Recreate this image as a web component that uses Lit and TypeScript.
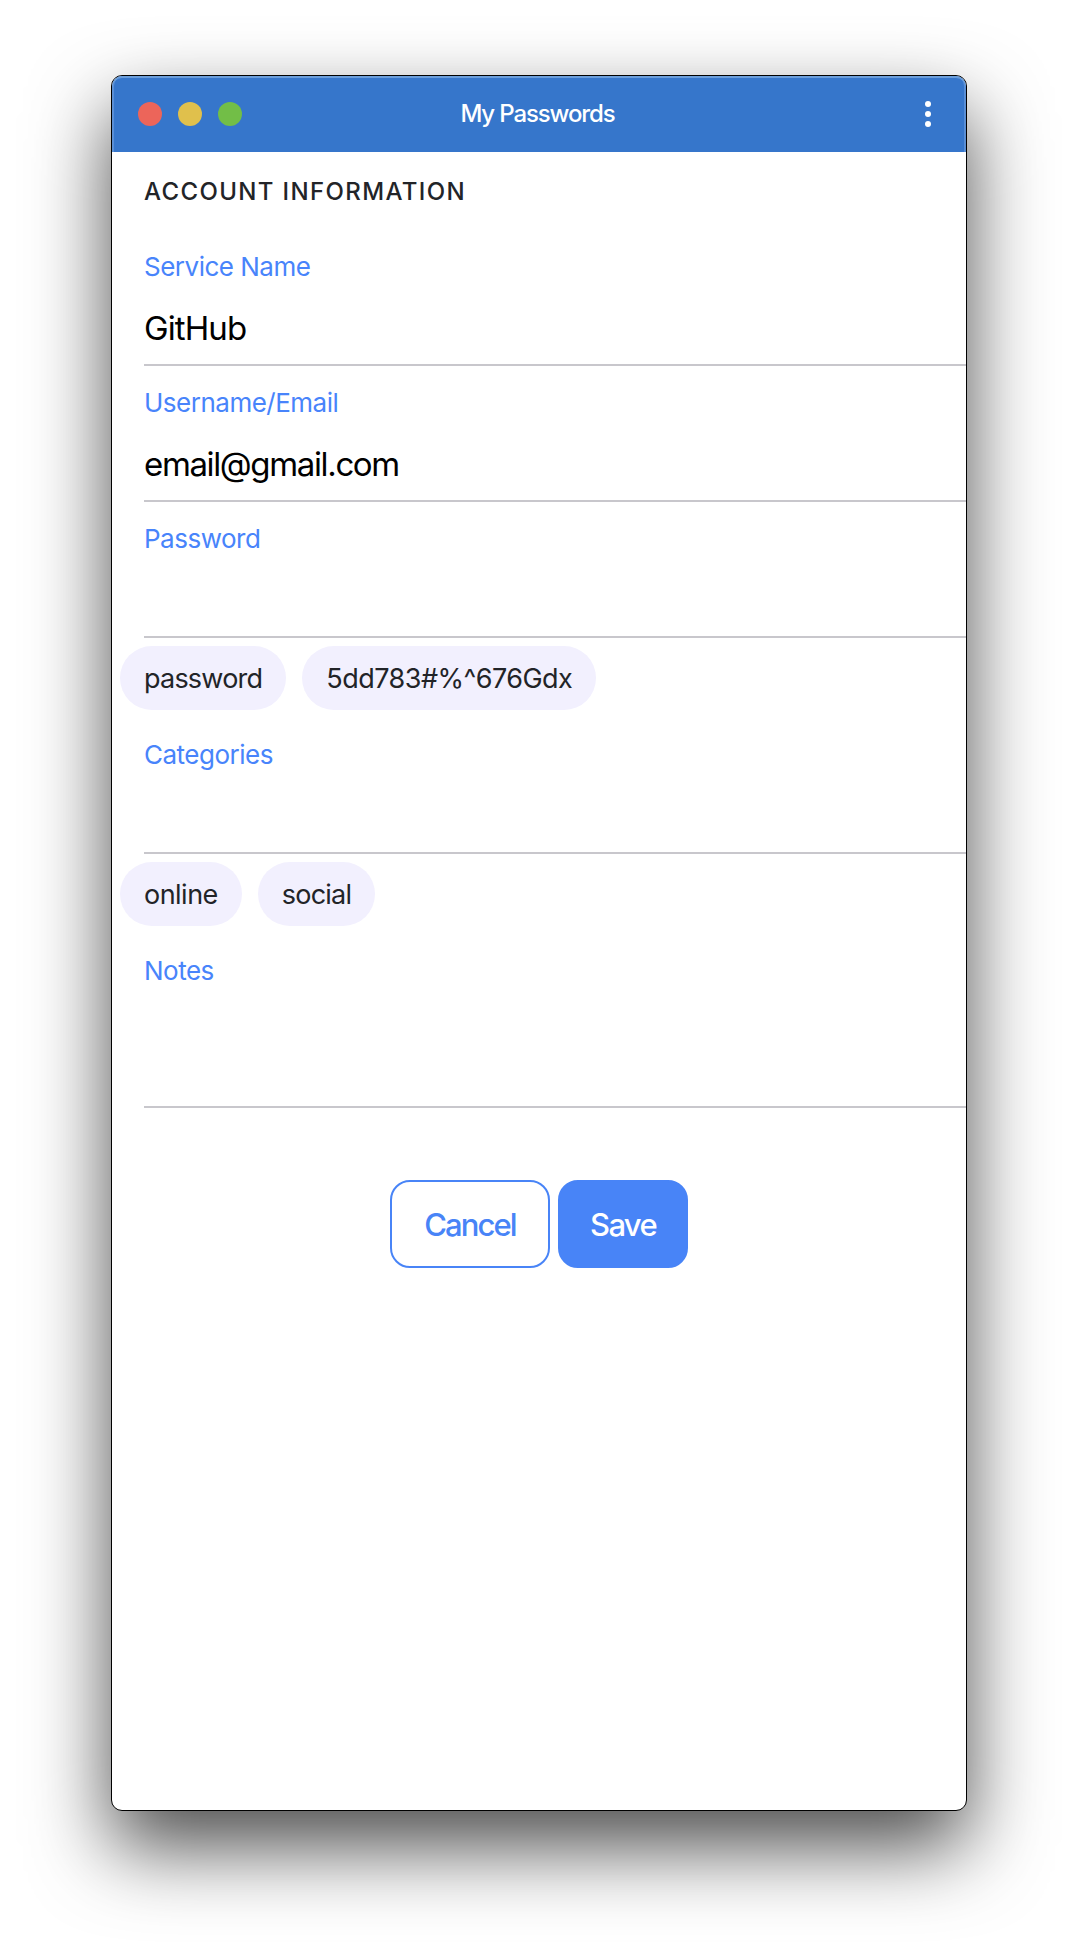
import { LitElement, html, css } from "lit";
import { customElement, property } from "lit/decorators.js";

@customElement("form-field")
class FormField extends LitElement {
  @property() label = "";
  @property() value = "";
  @property() kind = "";

  static styles = css`
    :host { display: block; margin-left: 32px; }
    .field {
      box-sizing: border-box;
      height: 136px;
      padding-top: 20px;
      border-bottom: 2px solid #c8c7cc;
    }
    .notes { height: 174px; }
    .label {
      height: 34px;
      line-height: 34px;
      font-size: 26px;
      letter-spacing: -0.5px;
      color: #4884fb;
    }
    .value {
      margin-top: 24px;
      height: 40px;
      line-height: 40px;
      font-size: 33px;
      letter-spacing: -0.9px;
      color: #000;
    }
    .email .value { letter-spacing: -1.36px; }
  `;

  render() {
    return html`
      <div class="field ${this.kind}">
        <div class="label">${this.label}</div>
        <div class="value">${this.value}</div>
      </div>
    `;
  }
}

@customElement("app-root")
class AppRoot extends LitElement {
  static styles = css`
    :host {
      display: block;
      box-sizing: border-box;
      height: 1958px;
      padding: 75px 111px 0;
      overflow: hidden;
      background: #fff;
      font-family: Inter, "Liberation Sans", sans-serif;
    }
    .window {
      box-sizing: border-box;
      width: 856px;
      height: 1736px;
      border: 1px solid #000;
      border-radius: 11px;
      background: #fff;
      overflow: hidden;
      box-shadow: 0 36px 80px rgba(0, 0, 0, 0.7);
    }
    .titlebar {
      box-sizing: border-box;
      height: 76px;
      display: grid;
      grid-template-columns: 1fr auto 1fr;
      align-items: center;
      padding: 0 26px;
      border-radius: 10px 10px 0 0;
      background: #3676cb;
      box-shadow: inset 0 2px 0 #6b9edb, inset 2px 0 0 #5a8fd6, inset -2px 0 0 #5a8fd6;
    }
    .lights { display: flex; gap: 16px; }
    .light { width: 24px; height: 24px; border-radius: 50%; }
    .red { background: #ec655a; }
    .yellow { background: #e0c04c; }
    .green { background: #72be47; }
    .title {
      padding: 0 3px 2px 0;
      font-size: 24px;
      font-weight: 500;
      letter-spacing: -1.12px;
      color: #fff;
    }
    .more { justify-self: end; display: block; margin-right: 9px; }
    .heading {
      margin: 24px 0 22px 32px;
      height: 32px;
      line-height: 32px;
      font-size: 24px;
      font-weight: 450;
      letter-spacing: 1.36px;
      color: #222428;
    }
    .chips { display: flex; gap: 16px; margin: 8px 0 8px 8px; }
    .chip {
      box-sizing: border-box;
      height: 64px;
      line-height: 65px;
      padding: 0 24px;
      border-radius: 32px;
      background: #f2f0fe;
      color: #222428;
      font-size: 27px;
      letter-spacing: -0.52px;
      white-space: nowrap;
    }
    .tight { letter-spacing: -0.78px; }
    .actions { display: flex; justify-content: center; gap: 8px; margin-top: 72px; }
    .button {
      box-sizing: border-box;
      height: 88px;
      border: 2px solid #4884f7;
      border-radius: 20px;
      font-family: inherit;
      font-size: 31px;
      font-weight: 500;
      letter-spacing: -1.9px;
      padding: 0;
    }
    .cancel { width: 160px; background: #fff; color: #4884f7; }
    .save { width: 130px; background: #4884f7; color: #fff; letter-spacing: -1.7px; }
  `;

  render() {
    return html`
      <main class="window">
        <header class="titlebar">
          <div class="lights">
            <span class="light red"></span>
            <span class="light yellow"></span>
            <span class="light green"></span>
          </div>
          <div class="title">My Passwords</div>
          <svg class="more" width="6" height="26" viewBox="0 0 6 26" fill="#fff">
            <circle cx="3" cy="3" r="3" />
            <circle cx="3" cy="13" r="3" />
            <circle cx="3" cy="23" r="3" />
          </svg>
        </header>
        <div class="heading">ACCOUNT INFORMATION</div>
        <form-field label="Service Name" value="GitHub"></form-field>
        <form-field label="Username/Email" value="email@gmail.com" kind="email"></form-field>
        <form-field label="Password"></form-field>
        <div class="chips">
          <span class="chip tight">password</span>
          <span class="chip">5dd783#%^676Gdx</span>
        </div>
        <form-field label="Categories"></form-field>
        <div class="chips">
          <span class="chip">online</span>
          <span class="chip tight">social</span>
        </div>
        <form-field label="Notes" kind="notes"></form-field>
        <div class="actions">
          <button class="button cancel">Cancel</button>
          <button class="button save">Save</button>
        </div>
      </main>
    `;
  }
}
